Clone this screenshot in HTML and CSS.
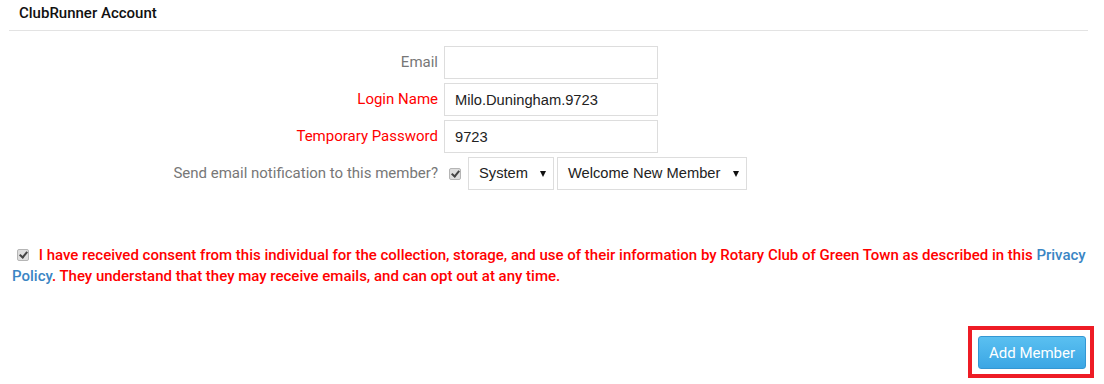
FILE: index.html
```html
<!DOCTYPE html>
<html lang="en">
<head>
    <meta charset="UTF-8">
    <title>ClubRunner Account</title>
    <link rel="stylesheet" href="styles.css">
</head>
<body>
    <div class="section">
        <h3 class="section-title">ClubRunner Account</h3>
    </div>

    <div class="account-form">
        <label class="form-label">Email</label>
        <input class="form-input" type="text">

        <label class="form-label required">Login Name</label>
        <input class="form-input" type="text" value="Milo.Duningham.9723">

        <label class="form-label required">Temporary Password</label>
        <input class="form-input" type="text" value="9723">

        <label class="form-label">Send email notification to this member?</label>
        <div class="notify-row">
            <input class="gray-check" type="checkbox" checked>
            <span class="fake-select system">System</span>
            <span class="fake-select template">Welcome New Member</span>
        </div>
    </div>

    <p class="consent">
        <input class="gray-check" type="checkbox" checked>
        I have received consent from this individual for the collection, storage, and use of their information by Rotary Club of Green Town as described in this <a href="#">Privacy Policy</a>. They understand that they may receive emails, and can opt out at any time.
    </p>

    <div class="actions">
        <div class="highlight">
            <button class="add-btn">Add Member</button>
        </div>
    </div>
</body>
</html>
```

FILE: styles.css
```css
* {
    margin: 0;
    padding: 0;
    box-sizing: border-box;
}

body {
    background-color: #ffffff;
    font-family: 'Roboto', sans-serif;
    font-size: 15px;
    color: #333;
    width: 1104px;
    height: 384px;
    overflow: hidden;
}

.section {
    margin: 0 16px 0 9px;
    border-bottom: 1px solid #e3e3e3;
    padding: 4px 10px 8px;
}

.section-title {
    font-size: 15px;
    font-weight: 500;
    color: #111;
    line-height: 18px;
}

.account-form {
    display: grid;
    grid-template-columns: 438px auto;
    column-gap: 6px;
    row-gap: 4px;
    margin-top: 15px;
    align-items: center;
}

.form-label {
    text-align: right;
    color: #777;
    font-size: 15px;
    line-height: 17px;
}

.form-label.required {
    color: #ff0000;
}

.form-input {
    width: 214px;
    height: 33px;
    border: 1px solid #ddd;
    padding: 0 10px;
    font-family: 'Liberation Sans', Arial, sans-serif;
    font-size: 14.7px;
    color: #222;
    outline: none;
}

.notify-row {
    display: flex;
    align-items: center;
}

.gray-check {
    appearance: none;
    -webkit-appearance: none;
    width: 12px;
    height: 12px;
    border: 1px solid #b5b5b5;
    border-radius: 2px;
    background: #dedede;
    position: relative;
    vertical-align: middle;
}

.gray-check::after {
    content: '';
    position: absolute;
    left: 3px;
    top: 0px;
    width: 3px;
    height: 6px;
    border: solid #444;
    border-width: 0 2px 2px 0;
    transform: rotate(40deg);
}

.notify-row .gray-check {
    margin-left: 5px;
    margin-right: 7px;
}

.fake-select {
    position: relative;
    height: 33px;
    border: 1px solid #ddd;
    padding-left: 10px;
    font-family: 'Liberation Sans', Arial, sans-serif;
    font-size: 14.7px;
    color: #222;
    line-height: 31px;
    margin-right: 3px;
}

.fake-select::after {
    content: '';
    position: absolute;
    right: 7px;
    top: 13px;
    border-left: 3px solid transparent;
    border-right: 3px solid transparent;
    border-top: 6px solid #111;
}

.fake-select.system {
    width: 86px;
}

.fake-select.template {
    width: 190px;
}

.consent {
    margin: 55px 10px 0 12px;
    color: #ff0000;
    font-weight: 500;
    font-size: 15px;
    line-height: 21px;
}

.consent .gray-check {
    margin: -3px 6px 0 5px;
}

.consent a {
    color: #3a85c4;
    text-decoration: none;
}

.actions {
    display: flex;
    justify-content: flex-end;
    margin-top: 39px;
    padding-right: 10px;
}

.highlight {
    border: 4px solid #ee1c25;
    padding: 6px 4px 5px 6px;
}

.add-btn {
    width: 108px;
    height: 33px;
    border: 1px solid #3497d3;
    border-radius: 3px;
    background: linear-gradient(#5ac0f1, #3ba6e4);
    color: #ffffff;
    font-family: 'Roboto', sans-serif;
    font-size: 15px;
    cursor: pointer;
}
```
